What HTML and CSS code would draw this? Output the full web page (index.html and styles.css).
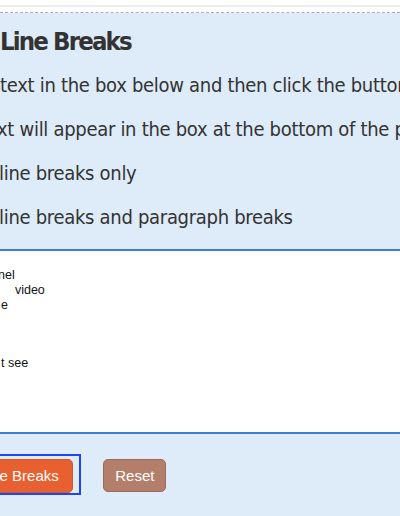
FILE: index.html
```html
<!DOCTYPE html>
<html lang="en">
<head>
<meta charset="utf-8">
<title>Remove Line Breaks</title>
<link rel="stylesheet" href="styles.css">
</head>
<body>
  <div class="top">
    <div class="top-line"></div>
  </div>
  <main class="page">
    <section class="intro">
      <h1 class="title">Line Breaks</h1>
      <p class="line">text in the box below and then click the button</p>
      <p class="line shift">xt will appear in the box at the bottom of the page</p>
      <p class="line nudge">line breaks only</p>
      <p class="line nudge">line breaks and paragraph breaks</p>
    </section>
    <textarea class="textbox" spellcheck="false">nel
    video
e



t see</textarea>
    <div class="actions">
      <div class="focus-ring">
        <button class="btn btn-primary" type="button">Remove Line Breaks</button>
      </div>
      <button class="btn btn-reset" type="button">Reset</button>
    </div>
  </main>
</body>
</html>
```

FILE: styles.css
```css
html, body {
  overflow: hidden;
}

body {
  margin: 0;
  background: #deebf8;
  color: #333333;
  font-family: "DejaVu Sans Condensed", "DejaVu Sans", Verdana, sans-serif;
}

.top {
  box-sizing: border-box;
  height: 13px;
  padding-top: 5px;
  background: #ffffff;
  border-bottom: 1px dashed #a9afb6;
}

.top-line {
  height: 2px;
  background: #ececec;
}

.page {
  display: flex;
  flex-direction: column;
}

.intro {
  display: flex;
  flex-direction: column;
  gap: 19.7px;
  padding: 13.4px 0 20.1px 0;
  white-space: nowrap;
}

.title {
  margin: 0 0 -2.6px 0;
  font-family: "DejaVu Sans Condensed", "DejaVu Sans", sans-serif;
  font-weight: bold;
  font-size: 25.5px;
  line-height: 30px;
  letter-spacing: -1.85px;
  color: #333333;
}

.line {
  margin: 0;
  font-size: 20px;
  line-height: 24px;
  letter-spacing: -0.3px;
}

.shift {
  text-indent: -3px;
}

.nudge {
  text-indent: -1px;
}

.textbox {
  display: block;
  box-sizing: border-box;
  width: calc(100% + 24px);
  height: 185px;
  margin: 0 0 0 -11px;
  padding: 17.5px 10px 10px 10px;
  border: 2px solid #3a80d6;
  background: #ffffff;
  color: #111111;
  font-family: "Liberation Sans", Arial, Helvetica, sans-serif;
  font-size: 12.5px;
  line-height: 14.7px;
  text-indent: -3px;
  resize: none;
  outline: none;
  overflow: hidden;
}

.actions {
  display: flex;
  align-items: flex-start;
  gap: 22.5px;
  padding-top: 20px;
  margin-left: -100.5px;
}

.focus-ring {
  display: flex;
  border: 2px solid #1f45f2;
  padding: 3px 6px 0 6px;
}

.btn {
  box-sizing: border-box;
  height: 34px;
  border-radius: 5px;
  font-family: "Liberation Sans", Arial, Helvetica, sans-serif;
  font-size: 15px;
  line-height: 32px;
  color: #ffffff;
  padding: 0 11px;
  margin: 0;
  white-space: nowrap;
  cursor: pointer;
}

.btn-primary {
  padding-right: 13px;
  background: #e8602f;
  border: 1px solid #d3552a;
}

.btn-reset {
  height: 33px;
  margin-top: 5px;
  background: #b47f6a;
  border: 1px solid #9c6a58;
}
```
